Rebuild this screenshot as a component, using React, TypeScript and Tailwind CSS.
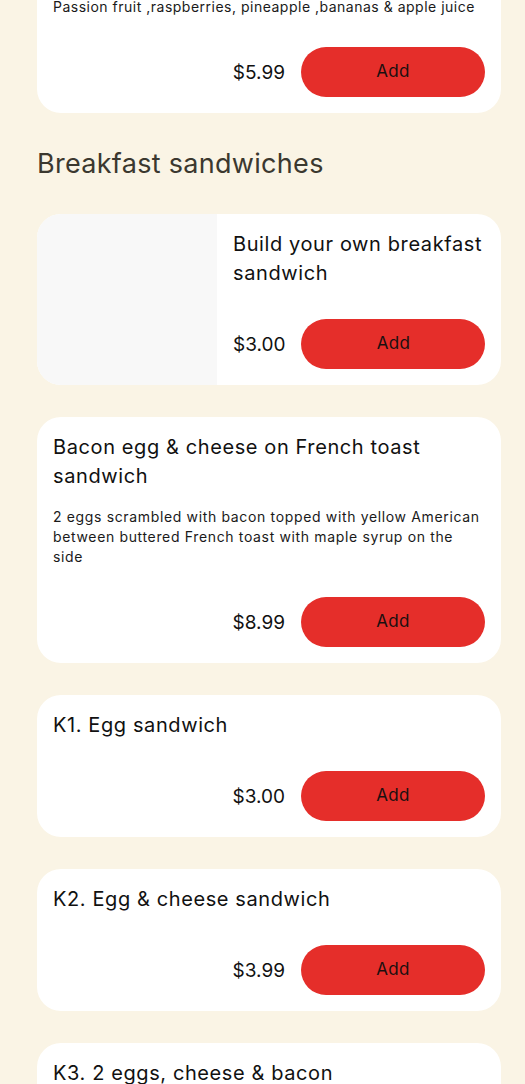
import React from "react";

interface MenuItem {
  name: string;
  description?: string;
  price: string;
  withImage?: boolean;
}

const items: MenuItem[] = [
  { name: "Build your own breakfast sandwich", price: "$3.00", withImage: true },
  {
    name: "Bacon egg & cheese on French toast sandwich",
    description:
      "2 eggs scrambled with bacon topped with yellow American between buttered French toast with maple syrup on the side",
    price: "$8.99",
  },
  { name: "K1. Egg sandwich", price: "$3.00" },
  { name: "K2. Egg & cheese sandwich", price: "$3.99" },
  { name: "K3. 2 eggs, cheese & bacon", price: "$5.49" },
];

function PriceRow({ price, afterText }: { price: string; afterText?: boolean }) {
  return (
    <div className={`flex items-center justify-end gap-4 ${afterText ? "mt-[30px]" : "mt-[31px]"}`}>
      <span className="text-[19px] leading-[29px] text-[#111111]">{price}</span>
      <button className="h-[50px] w-[184px] shrink-0 rounded-full bg-[#e52e2a] text-[17px] tracking-[0.3px] text-[#1a1010]">
        Add
      </button>
    </div>
  );
}

function ItemCard({ item }: { item: MenuItem }) {
  if (item.withImage) {
    return (
      <div className="flex overflow-hidden rounded-[24px] bg-white">
        <div className="w-[180px] shrink-0 bg-[#f8f8f8]" />
        <div className="flex flex-1 flex-col p-4">
          <h3 className="text-[20px] leading-[29px] tracking-[0.6px] text-[#111111]">{item.name}</h3>
          <PriceRow price={item.price} />
        </div>
      </div>
    );
  }
  return (
    <div className="flex flex-col rounded-[24px] bg-white p-4">
      <h3 className="text-[20px] leading-[29px] tracking-[0.6px] text-[#111111]">{item.name}</h3>
      {item.description && (
        <p className="mt-4 text-[14px] leading-[20px] tracking-[0.65px] text-[#1a1a1a]">
          {item.description}
        </p>
      )}
      <PriceRow price={item.price} afterText={!!item.description} />
    </div>
  );
}

export default function App() {
  return (
    <div
      className="h-[1084px] overflow-hidden bg-[#faf4e5] pl-[37px] pr-[24px]"
      style={{ fontFamily: "Inter, 'Noto Sans', sans-serif" }}
    >
      <div className="-mt-[64px] flex flex-col">
        <div className="flex flex-col rounded-[24px] bg-white p-4">
          <h3 className="text-[20px] leading-[29px] tracking-[0.6px] text-[#111111]">
            S3. Tropical smoothie
          </h3>
          <p className="mt-4 text-[14px] leading-[20px] tracking-[0.5px] text-[#1a1a1a]">
            Passion fruit ,raspberries, pineapple ,bananas &amp; apple juice
          </p>
          <div className="mt-[30px] flex items-center justify-end gap-4">
            <span className="text-[19px] leading-[29px] text-[#111111]">$5.99</span>
            <button className="h-[50px] w-[184px] shrink-0 rounded-full bg-[#e52e2a] text-[17px] tracking-[0.3px] text-[#1a1010]">
              Add
            </button>
          </div>
        </div>

        <h2 className="mt-[33px] mb-[32px] text-[27px] leading-[36px] tracking-[0.3px] text-[#3b382f]">
          Breakfast sandwiches
        </h2>

        <div className="flex flex-col gap-8">
          {items.map((item) => (
            <ItemCard key={item.name} item={item} />
          ))}
        </div>
      </div>
    </div>
  );
}
